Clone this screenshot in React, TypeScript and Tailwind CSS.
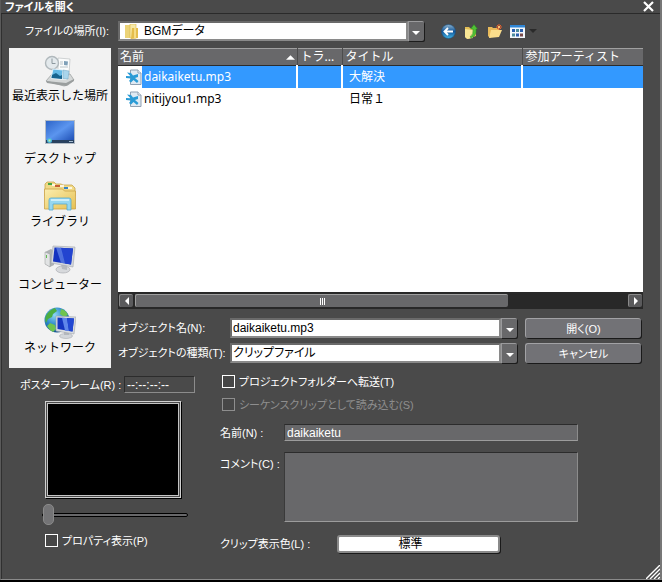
import type { ReactNode } from 'react';

const FILES = [
  { name: 'daikaiketu.mp3', track: '', title: '大解決', artist: '', selected: true },
  { name: 'nitijyou1.mp3', track: '', title: '日常１', artist: '', selected: false },
];

const PLACES = [
  { label: '最近表示した場所', icon: <RecentIcon /> },
  { label: 'デスクトップ', icon: <DesktopIcon /> },
  { label: 'ライブラリ', icon: <LibraryIcon /> },
  { label: 'コンピューター', icon: <ComputerIcon /> },
  { label: 'ネットワーク', icon: <NetworkIcon /> },
];

function RecentIcon() {
  return (
    <svg className="size-8" viewBox="0 0 32 32" aria-hidden="true">
      <path d="M2 26 8 19h18l4 6-6 5-4 1z" fill="#d5d8d8" stroke="#989c9c" strokeWidth=".7" />
      <path d="m2 26 20 2 8-4v2l-8 5-19-3z" fill="#9a9e9e" />
      <path d="m7 24 15 1 3-3-1-2H11z" fill="#eef1f1" />
      <path d="m14 3 12 1-1 15-11-2z" fill="#fbfcfc" stroke="#b4b9bb" strokeWidth=".6" />
      <path d="m20 6 4 .4-.5 4-3.500-.4z" fill="#7fa0b8" />
      <path d="M16 7h3m-3 2h3m-3 3h8" stroke="#a9b6bd" strokeWidth=".8" />
      <circle cx="8" cy="8" r="6.500" fill="#e3e9ec" stroke="#b0b8bc" strokeWidth="1.400" />
      <path d="M8 3.500V8.500h3.500" stroke="#8c989e" strokeWidth="1" fill="none" />
      <path d="m9 14 10 1-1 9-11-1z" fill="#63b8e4" stroke="#e9f4fa" strokeWidth=".9" />
      <path d="m8 20 4-2 4 3 2-1v4l-10.500-1z" fill="#17648f" />
      <path d="m19 15 6 1-1 8-5-.5z" fill="#a9d5ec" stroke="#6fa5c2" strokeWidth=".5" />
    </svg>
  );
}

function DesktopIcon() {
  return (
    <svg className="size-8" viewBox="0 0 32 32" aria-hidden="true">
      <defs>
        <linearGradient id="desk" x1="0" y1="0" x2="1" y2="1">
          <stop offset="0" stopColor="#2e65c8" />
          <stop offset=".5" stopColor="#5b95ef" />
          <stop offset="1" stopColor="#1c4cb2" />
        </linearGradient>
      </defs>
      <path d="M1 2h30v24H1z" fill="#b3bcc6" />
      <path d="M2 3h28v20H2z" fill="url(#desk)" />
      <path d="M2 22h28v3H2z" fill="#29415f" />
      <path d="M25 23h4v1h-4z" fill="#a6bdd3" />
      <circle cx="5.500" cy="22.500" r="2.500" fill="#49b8df" />
      <path d="M4.500 21.500h2v2h-2z" fill="#c6ef9a" />
    </svg>
  );
}

function LibraryIcon() {
  return (
    <svg className="size-8" viewBox="0 0 32 32" aria-hidden="true">
      <defs>
        <linearGradient id="lib" x1="0" y1="0" x2="1" y2="1">
          <stop offset="0" stopColor="#fbeeb0" />
          <stop offset="1" stopColor="#e6c052" />
        </linearGradient>
      </defs>
      <path d="M1 3 3 1h7l2 2h5l2 1h9l3 3v8H1z" fill="#f0d987" stroke="#c49e3d" strokeWidth=".7" />
      <path d="M4 2h4v2H4z" fill="#43a446" />
      <path d="M11 4h5v2h-5z" fill="#c65e35" />
      <path d="M20 6h4v2h-4z" fill="#3683c4" />
      <path d="M8 4h3m5 1h4m4 2h4" stroke="#fff" strokeWidth="1.500" />
      <path d="M0.500 8h18l2 2h11v18H.5z" fill="url(#lib)" stroke="#cba247" strokeWidth=".8" />
      <path d="M5 29V19q0-2 2-2h18q2 0 2 2v10h-4v-6H9v6z" fill="#96d7f0" stroke="#57a9cf" strokeWidth=".8" />
      <path d="M7 19h18" stroke="#dff6fd" strokeWidth="1.500" />
    </svg>
  );
}

function ComputerIcon() {
  return (
    <svg className="size-8" viewBox="0 0 32 32" aria-hidden="true">
      <path d="m1 8 6-3 3 2v14l-4 2-5-3z" fill="#aeb2b4" />
      <path d="m1 8 5 2v13l-5-3z" fill="#e1e3e4" stroke="#96999b" strokeWidth=".5" />
      <path d="M2.500 11v3" stroke="#62ba52" strokeWidth="1" />
      <ellipse cx="19" cy="25.500" rx="7" ry="3.500" fill="#d7d9dc" stroke="#a2a5a9" strokeWidth=".6" />
      <path d="m17 20 6 1v5l-5-1z" fill="#b7babf" />
      <path d="m9 2 22 1-2 20-22-4z" fill="#d5d8dc" stroke="#a4a8ae" strokeWidth=".6" />
      <path d="m10.500 3.500 18.500 1-2 16L9 17.500z" fill="#1432c0" />
      <path d="m16 3.800 13 .7-2 16-6-.9z" fill="#2344d0" />
      <path d="m12 3.600 5 .3 4 15.500-4-.6z" fill="#7599f0" opacity=".6" />
    </svg>
  );
}

function NetworkIcon() {
  return (
    <svg className="size-8" viewBox="0 0 32 32" aria-hidden="true">
      <defs>
        <radialGradient id="globe" cx=".4" cy=".3" r=".8">
          <stop offset="0" stopColor="#8fd6f6" />
          <stop offset=".5" stopColor="#2b87c9" />
          <stop offset="1" stopColor="#0e4380" />
        </radialGradient>
      </defs>
      <circle cx="13" cy="13" r="12.500" fill="url(#globe)" />
      <path d="M3 7q4-5 8-6l2 3-4 3-1 3-4 2-2 4q-2-5 1-9z" fill="#4cae42" />
      <path d="M17 2q5 1 7 6l-4 2-4-3zM6 16l5 2 1 4-3 3q-4-2-6-6z" fill="#6fc44e" />
      <ellipse cx="22" cy="29" rx="6.500" ry="2.500" fill="#d3d6da" stroke="#9da1a6" strokeWidth=".5" />
      <path d="M20 24h5v4h-5z" fill="#b4b8bd" />
      <path d="m12 9 20 1-2 17-18-3z" fill="#d9dce0" stroke="#a0a4aa" strokeWidth=".6" />
      <path d="m13.500 10.500 16.500 1-1.500 13-15-2.500z" fill="#1536c0" />
      <path d="m18 10.800 5 .3 2 13-4-.7z" fill="#5f86ea" />
      <path d="m23 11.100 7 .4-1.500 13-3.500-.5z" fill="#2248d2" />
    </svg>
  );
}

function Mp3Icon() {
  return (
    <svg className="size-4 shrink-0" viewBox="0 0 16 16" aria-hidden="true">
      <path d="M4.500 1H12l3 3v11.500H4.500z" fill="#dfeaf3" stroke="#8fa0b2" />
      <path d="M12 1v3h3" fill="#fff" stroke="#8fa0b2" />
      <path d="M1 3.500 5 4l2 2.500L12 5v3l-3 1 3.500 3-1.500 2-3.500-3-2.500 2.500-2-1.500L5 9.500 0 9V7l4.500.3z" fill="#2a9bd6" />
    </svg>
  );
}

function FolderIcon() {
  return (
    <svg className="pointer-events-none absolute top-[3px] left-[7px] h-[15px] w-[14px]" viewBox="0 0 14 15" aria-hidden="true">
      <path d="M0 1h5l1 1v12H0z" fill="#ecd377" />
      <path d="M5 0h6v14H5z" fill="#f8eaa6" stroke="#d8b64c" strokeWidth=".6" />
      <path d="m6 15 1-11h6v10z" fill="#e4bd4b" />
      <path d="M9 4h2v10H9z" fill="#f5dc86" />
    </svg>
  );
}

function BackIcon() {
  return (
    <svg className="size-[15px]" viewBox="0 0 15 15" aria-hidden="true">
      <defs>
        <linearGradient id="back" x1="0" y1="0" x2="0" y2="1">
          <stop offset="0" stopColor="#8fb4cf" />
          <stop offset=".5" stopColor="#12569a" />
          <stop offset="1" stopColor="#43b6e6" />
        </linearGradient>
      </defs>
      <circle cx="7.500" cy="7.500" r="7" fill="url(#back)" stroke="#184f80" strokeWidth=".6" />
      <path d="M12 7.500H4M7 4 3.500 7.500 7 11" stroke="#fff" strokeWidth="1.900" fill="none" />
    </svg>
  );
}

function UpIcon() {
  return (
    <svg className="size-[15px]" viewBox="0 0 15 15" aria-hidden="true">
      <path d="M1 3h4l1 1h6v8l-8 3-3-2z" fill="#e2bd55" />
      <path d="m1 5 8 1v8l-6 1-2-2z" fill="#f8e695" />
      <path d="M6 13q4-3 3-8H6.500L10 .5 13.500 5H12q1 6-4.500 9z" fill="#4fbf35" stroke="#2a8c1e" strokeWidth=".5" />
    </svg>
  );
}

function NewFolderIcon() {
  return (
    <svg className="size-[15px]" viewBox="0 0 15 15" aria-hidden="true">
      <path d="M1 3h4l1 1h6v2L3 14l-2-2z" fill="#e9ba5a" />
      <path d="M4 6h11l-3 7-10 1z" fill="#fadd8b" />
      <path d="M12 0v6M9 3h6M10 1l4 4m0-4-4 4" stroke="#e8602c" strokeWidth="1" />
      <circle cx="12" cy="3" r="1" fill="#ffe08a" />
    </svg>
  );
}

function ViewIcon() {
  return (
    <svg className="h-[13px] w-[15px]" viewBox="0 0 15 13" aria-hidden="true">
      <path d="M0 0h15v13H0z" fill="#f3f8fc" />
      <path d="M0 0h15v2.500H0z" fill="#2f86d6" />
      <path d="M2 4h3v3H2zM10 4h3v3h-3zM6 8.500h3v3H6z" fill="#2a5fae" />
      <path d="M6 4h3v3H6zM2 8.500h3v3H2z" fill="#4c8c9c" />
      <path d="M10 8.500h3v3h-3z" fill="#7a4a4a" />
    </svg>
  );
}

function Triangle({ className, points }: { className: string; points: string }) {
  return (
    <svg className={className} viewBox="0 0 8 8" fill="currentColor" aria-hidden="true">
      <polygon points={points} />
    </svg>
  );
}

const DOWN = '0,2 8,2 4,6';
const UP = '0,6 8,6 4,2';
const LEFT = '6,0 6,8 2,4';
const RIGHT = '2,0 2,8 6,4';

const arrowBox =
  'flex w-4 shrink-0 items-center justify-center rounded-r-[2px] border-t border-l border-[#9a9a9c] bg-[#68686a] pt-[2px] text-white shadow-[1px_1px_0_#1c1c1c]';
const field =
  'h-5 w-full min-w-0 appearance-none rounded-none border-2 border-t-[#6a6a6a] border-l-[#6a6a6a] border-r-[#8a8a8a] border-b-[#8a8a8a] bg-white text-xs text-black outline-none';
const pushButton =
  'h-5 rounded-[3px] border-t border-l border-[#a2a2a5] bg-[#727276] text-[11px] leading-4 shadow-[1px_1px_0_#1a1a1a]';
const darkField =
  'block w-full rounded-none border border-t-[#2c2c2c] border-l-[#3a3a3a] border-r-[#8c8c8c] border-b-[#9c9c9c] bg-[#68686a] px-[2px] text-xs text-white outline-none';

function Checkbox({ id, label, disabled }: { id: string; label: ReactNode; disabled?: boolean }) {
  return (
    <div className={disabled ? 'flex h-[13px] items-center gap-1 text-[#8e8e8e]' : 'flex h-[13px] items-center gap-1'}>
      <input
        id={id}
        type="checkbox"
        disabled={disabled}
        className="size-[13px] shrink-0 appearance-none border border-current bg-[#464646] checked:bg-white"
      />
      <label htmlFor={id}>{label}</label>
    </div>
  );
}

export default function App() {
  return (
    <div className="flex min-h-screen w-full flex-col border-b-2 border-black bg-[#4a4a4a] font-['Liberation_Sans','Noto_Sans_CJK_JP',sans-serif] text-[11px] leading-4 whitespace-nowrap text-white [font-feature-settings:'palt']">
      <div className="relative flex grow flex-col border-r-2 border-b border-l border-r-[#777] border-b-[#8a8a8a] border-l-[#5a5a5a]">
        <header className="flex h-[14px] items-center justify-between border-b border-[#2a2a2a] pr-1 pl-1">
          <h1 className="text-[11px] leading-3 font-bold">ファイルを開く</h1>
          <button type="button" aria-label="閉じる" className="mr-[2px]">
            <svg className="size-[11px]" viewBox="0 0 11 11" aria-hidden="true">
              <path d="m1 1 9 9m0-9-9 9" stroke="#fff" strokeWidth="2.200" />
            </svg>
          </button>
        </header>

        <main className="flex grow flex-col border-l border-[#303030]">
          {/* Look-in row */}
          <div className="flex items-center gap-[7px] pt-[7px] pb-[7px] pl-[7px]">
            <label htmlFor="location" className="w-[102px] shrink-0 pr-[2px] text-right">
              ファイルの場所(I):
            </label>
            <div className="flex w-[47%] shrink-0">
              <div className="relative min-w-0 flex-1">
                <FolderIcon />
                <select id="location" className={`${field} pl-6`}>
                  <option>BGMデータ</option>
                </select>
              </div>
              <span className={arrowBox}>
                <Triangle className="size-2" points={DOWN} />
              </span>
            </div>
            <div className="flex items-center gap-2 pl-[10px]">
              <button type="button" aria-label="戻る"><BackIcon /></button>
              <button type="button" aria-label="上へ"><UpIcon /></button>
              <button type="button" aria-label="新しいフォルダー"><NewFolderIcon /></button>
              <button type="button" aria-label="表示" className="flex items-center gap-1 text-[#2a2a2a]">
                <ViewIcon />
                <Triangle className="size-2" points={DOWN} />
              </button>
            </div>
          </div>

          <div className="flex grow gap-[7px] pr-[17px] pl-[7px]">
            <nav className="flex w-[102px] shrink-0 flex-col gap-[14px] bg-[#f2f2f2] pt-[7px] text-xs text-black">
              {PLACES.map((place) => (
                <button
                  key={place.label}
                  type="button"
                  className="flex flex-col items-center gap-px leading-4 [font-feature-settings:normal]"
                >
                  {place.icon}
                  {place.label}
                </button>
              ))}
            </nav>

            <div className="flex min-w-0 flex-1 flex-col pb-[5px]">
              {/* File list */}
              <div className="grow bg-white font-['Noto_Sans','Noto_Sans_CJK_JP',sans-serif] text-xs text-black [font-feature-settings:normal]">
                <table className="w-full table-fixed border-collapse text-left">
                  <colgroup>
                    <col className="w-[179px]" />
                    <col className="w-[45px]" />
                    <col className="w-[180px]" />
                    <col />
                  </colgroup>
                  <thead>
                    <tr className="h-[17px] border-t border-b border-t-[#a0a0a0] border-b-[#2c2c2c] bg-[#68686a] leading-4 text-white">
                      <th className="border-r border-[#4c4c4c] p-0 pl-[2px] font-normal">
                        <div className="flex items-center justify-between pr-[2px]">
                          名前
                          <Triangle className="size-[9px]" points={UP} />
                        </div>
                      </th>
                      <th className="border-r border-[#4c4c4c] p-0 pl-[3px] font-normal">トラ...</th>
                      <th className="border-r border-[#4c4c4c] p-0 pl-[3px] font-normal">タイトル</th>
                      <th className="p-0 pl-[3px] font-normal">参加アーティスト</th>
                    </tr>
                  </thead>
                  <tbody>
                    {FILES.map((file) => (
                      <tr key={file.name} className={file.selected ? 'h-[22px] text-white' : 'h-[22px]'}>
                        <td className="p-0 pl-2">
                          <div className="flex items-center">
                            <Mp3Icon />
                            <span
                              className={
                                file.selected
                                  ? 'h-[22px] grow bg-[#3399ff] pl-[2px] leading-[22px]'
                                  : 'h-[22px] grow pl-[2px] leading-[22px]'
                              }
                            >
                              {file.name}
                            </span>
                          </div>
                        </td>
                        {[file.track, file.title, file.artist].map((value, i) => (
                          <td
                            key={i}
                            className={
                              file.selected
                                ? 'border-l-2 border-white bg-[#3399ff] p-0 pl-[6px]'
                                : 'border-l-2 border-white p-0 pl-[6px]'
                            }
                          >
                            {value}
                          </td>
                        ))}
                      </tr>
                    ))}
                  </tbody>
                </table>
              </div>
              <div className="flex h-[17px] items-center gap-[2px] bg-[#282828] px-[1px]">
                <button
                  type="button"
                  aria-label="左へスクロール"
                  className="flex h-[13px] w-[14px] items-center justify-center rounded-[2px] border-t border-l border-[#8a8a8a] bg-[#5a5a5c]"
                >
                  <Triangle className="size-2" points={LEFT} />
                </button>
                <div className="flex-1">
                  <div className="flex h-[13px] w-[76%] items-center justify-center gap-[1px] rounded-[2px] border-t border-l border-[#a0a0a0] bg-[#68686a]">
                    <span className="h-[7px] w-px bg-white" />
                    <span className="h-[7px] w-px bg-white" />
                    <span className="h-[7px] w-px bg-white" />
                  </div>
                </div>
                <button
                  type="button"
                  aria-label="右へスクロール"
                  className="flex h-[13px] w-[14px] items-center justify-center rounded-[2px] border-t border-l border-[#8a8a8a] bg-[#5a5a5c]"
                >
                  <Triangle className="size-2" points={RIGHT} />
                </button>
              </div>

              {/* File name and type */}
              <div className="mt-[9px] grid grid-cols-[112px_1fr_116px] items-center gap-y-[5px] pr-[2px]">
                <label htmlFor="object-name">オブジェクト名(N):</label>
                <div className="mr-2 flex">
                  <input id="object-name" defaultValue="daikaiketu.mp3" className={`${field} pl-px`} />
                  <button type="button" aria-label="履歴" className={arrowBox}>
                    <Triangle className="size-2" points={DOWN} />
                  </button>
                </div>
                <button type="button" className={pushButton}>開く(O)</button>

                <label htmlFor="object-type">オブジェクトの種類(T):</label>
                <div className="mr-2 flex">
                  <select id="object-type" className={`${field} pl-px`}>
                    <option>クリップファイル</option>
                  </select>
                  <span className={arrowBox}>
                    <Triangle className="size-2" points={DOWN} />
                  </span>
                </div>
                <button type="button" className={pushButton}>キャンセル</button>
              </div>
            </div>
          </div>

          <div className="flex pb-[26px]">
            {/* Poster frame */}
            <section className="flex w-[218px] shrink-0 flex-col pt-2 pl-[18px]">
              <div className="flex items-center">
                <label htmlFor="poster" className="w-[104px] shrink-0">
                  ポスターフレーム(R) :
                </label>
                <input
                  id="poster"
                  readOnly
                  defaultValue="--:--:--:--"
                  className="h-[17px] w-[71px] border border-t-[#2c2c2c] border-l-[#2c2c2c] border-r-[#8c8c8c] border-b-[#8c8c8c] bg-[#4a4a4a] px-[2px] text-xs outline-none"
                />
              </div>
              <div className="mt-2 ml-[25px] h-[97px] w-[136px] border border-[#d0d0d0] bg-black shadow-[1px_1px_0_#000]">
                <div className="size-full border border-[#4a4a4a]">
                  <div className="size-full border border-[#c4c4c4]" />
                </div>
              </div>
              <input
                type="range"
                aria-label="ポスターフレーム位置"
                defaultValue={0}
                className="mt-[6px] ml-[22px] h-[21px] w-[146px] appearance-none bg-transparent [&::-webkit-slider-runnable-track]:h-[4px] [&::-webkit-slider-runnable-track]:rounded-[2px] [&::-webkit-slider-runnable-track]:border [&::-webkit-slider-runnable-track]:border-black [&::-webkit-slider-runnable-track]:bg-[#68686a] [&::-webkit-slider-thumb]:-mt-[10px] [&::-webkit-slider-thumb]:h-[21px] [&::-webkit-slider-thumb]:w-[11px] [&::-webkit-slider-thumb]:appearance-none [&::-webkit-slider-thumb]:rounded-[5px] [&::-webkit-slider-thumb]:border [&::-webkit-slider-thumb]:border-[#8a8a8a] [&::-webkit-slider-thumb]:bg-[#747476]"
              />
              <div className="mt-[9px] ml-[25px]">
                <Checkbox id="show-props" label="プロパティ表示(P)" />
              </div>
            </section>

            {/* Clip options */}
            <section className="min-w-0 flex-1 pt-[7px] pr-[82px]">
              <div className="flex flex-col gap-[10px] pl-[2px]">
                <Checkbox id="transfer" label="プロジェクトフォルダーへ転送(T)" />
                <Checkbox id="sequence" label="シーケンスクリップとして読み込む(S)" disabled />
              </div>
              <div className="mt-[13px] flex items-center">
                <label htmlFor="clip-name" className="w-16 shrink-0">名前(N) :</label>
                <input id="clip-name" defaultValue="daikaiketu" className={`${darkField} h-[17px]`} />
              </div>
              <div className="mt-[11px] flex">
                <label htmlFor="comment" className="w-16 shrink-0 pt-1">コメント(C) :</label>
                <textarea id="comment" className={`${darkField} h-[70px] resize-none`} />
              </div>
              <div className="mt-[13px] flex items-center">
                <label htmlFor="clip-color" className="w-[117px] shrink-0">クリップ表示色(L) :</label>
                <button
                  id="clip-color"
                  type="button"
                  className="h-[18px] w-[163px] rounded-[3px] border-2 border-[#8a8a8a] bg-white pr-4 text-xs leading-3 text-black shadow-[1px_1px_0_#1a1a1a]"
                >
                  標準
                </button>
              </div>
            </section>
          </div>
        </main>

        <svg className="absolute right-0 bottom-0 size-[14px]" viewBox="0 0 14 14" aria-hidden="true">
          <path d="M0 14 14 0M4 14 14 4M8 14l6-6M12 14l2-2" stroke="#fff" strokeWidth="1.400" />
        </svg>
      </div>
    </div>
  );
}
